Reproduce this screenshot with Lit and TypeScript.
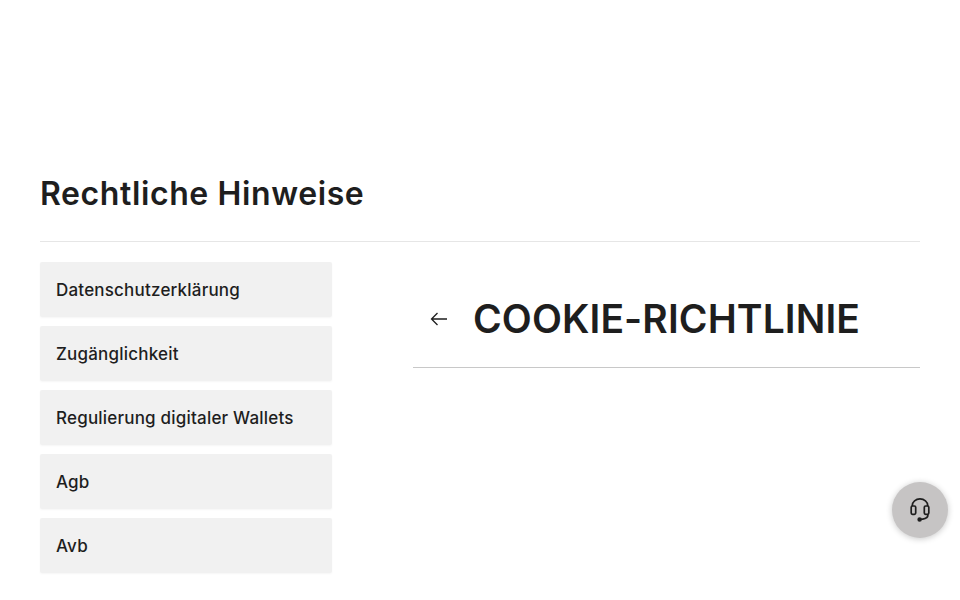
import { LitElement, html, css } from "lit";
import { customElement } from "lit/decorators.js";

const ITEMS = ["Datenschutzerklärung", "Zugänglichkeit", "Regulierung digitaler Wallets", "Agb", "Avb"];

@customElement("app-root")
export class AppRoot extends LitElement {
  static styles = css`
    :host {
      display: block;
      height: 600px;
      overflow: hidden;
      position: relative;
      background: #fff;
      font-family: "Inter", "Liberation Sans", sans-serif;
      color: #1e1e1e;
    }
    .page {
      padding: 172px 40px 0;
    }
    h1 {
      margin: 0;
      font-size: 32px;
      line-height: 44px;
      font-weight: 600;
      letter-spacing: 0.6px;
      padding-bottom: 25px;
      border-bottom: 1px solid #e6e6e6;
    }
    .cols {
      display: grid;
      grid-template-columns: 292px 507px;
      justify-content: space-between;
      padding-top: 20px;
    }
    .menu {
      display: flex;
      flex-direction: column;
      gap: 9px;
    }
    .item {
      height: 55px;
      display: flex;
      align-items: center;
      padding: 0 16px;
      background: #f1f1f1;
      border-radius: 2px;
      font-size: 17px;
      font-weight: 500;
      letter-spacing: 0.2px;
      box-shadow: 0 1px 2px rgba(0, 0, 0, 0.04);
    }
    .head {
      display: flex;
      align-items: center;
      gap: 25px;
      height: 105px;
      box-sizing: content-box;
      padding-left: 17px;
      border-bottom: 1px solid #c8c8c8;
    }
    .head svg {
      flex: none;
      margin-top: 8px;
    }
    h2 {
      margin: 8px 0 0;
      font-size: 39px;
      line-height: 56px;
      font-weight: 600;
      letter-spacing: 0.1px;
      white-space: nowrap;
    }
    .help {
      position: absolute;
      left: 892px;
      top: 482px;
      width: 56px;
      height: 56px;
      border-radius: 50%;
      background: #c6c4c4;
      box-shadow: 0 1px 6px rgba(0, 0, 0, 0.22);
      display: flex;
      align-items: center;
      justify-content: center;
    }
  `;

  render() {
    return html`
      <div class="page">
        <h1>Rechtliche Hinweise</h1>
        <div class="cols">
          <div class="menu">
            ${ITEMS.map((t) => html`<div class="item">${t}</div>`)}
          </div>
          <div class="head">
            <svg width="18" height="14" viewBox="0 0 18 14" fill="none" stroke="#1e1e1e" stroke-width="1.3">
              <path d="M17 7H1.5M7.5 1 1.5 7l6 6" />
            </svg>
            <h2>COOKIE-RICHTLINIE</h2>
          </div>
        </div>
      </div>
      <div class="help">
        <svg width="24" height="24" viewBox="0 0 24 24" fill="none" stroke="#1e1e1e" stroke-width="1.7">
          <path d="M4.3 8V7.5a7.7 6.6 0 0 1 15.4 0V8" />
          <rect x="3.2" y="8" width="4.5" height="8.4" rx="1.3" />
          <rect x="16.3" y="8" width="4.5" height="8.4" rx="1.3" />
          <path d="M20 16.5c0 2.8-2.5 4.3-5.3 4.6L12 21.4" />
          <circle cx="11.6" cy="21.4" r="1.4" fill="#1e1e1e" />
        </svg>
      </div>
    `;
  }
}
